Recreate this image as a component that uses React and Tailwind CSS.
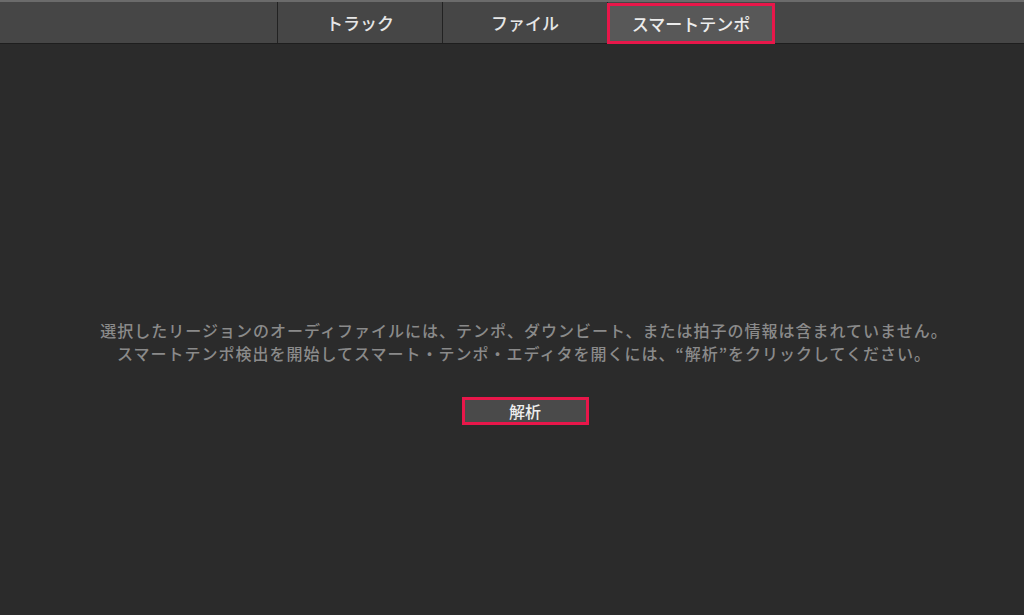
import React from "react";

const tabs = ["トラック", "ファイル", "スマートテンポ"];

const App = () => {
    return (
        <div className="w-[1024px] h-[615px] bg-[#2b2b2b] flex flex-col overflow-hidden" style={{ fontFamily: '"Noto Sans CJK JP", "Noto Sans", sans-serif' }}>
            <div className="h-[44px] bg-[#464646] border-t-2 border-t-[#6b6b6b] border-b border-b-[#1e1e1e] flex shrink-0">
                <div className="w-[278px] border-r border-r-[#222222]"></div>
                {tabs.map((t, i) => (
                    <div
                        key={t}
                        className={
                            i === 2
                                ? "w-[168px] -ml-px -mb-px mt-px bg-[#585858] border-[3px] border-[#e8174a] flex items-center justify-center text-[17px] font-medium text-[#ececec]"
                                : "w-[165px] border-r border-r-[#222222] flex items-center justify-center text-[17px] font-medium text-[#e6e6e6]"
                        }
                    >
                        {t}
                    </div>
                ))}
            </div>
            <div className="flex-1 flex flex-col items-center pt-[275px] pl-[24px]">
                <p className="text-[16px] font-medium tracking-[1px] leading-[23px] text-[#8a8a8a] text-center">
                    選択したリージョンのオーディファイルには、テンポ、ダウンビート、または拍子の情報は含まれていません。
                    <br />
                    スマートテンポ検出を開始してスマート・テンポ・エディタを開くには、“解析”をクリックしてください。
                </p>
                <button className="mt-[32px] ml-[2px] w-[127px] h-[28px] bg-[#4a4a4a] border-[3px] border-[#e8174a] text-[16px] font-medium text-[#eeeeee] flex items-center justify-center">
                    解析
                </button>
            </div>
        </div>
    );
};

export default App;
